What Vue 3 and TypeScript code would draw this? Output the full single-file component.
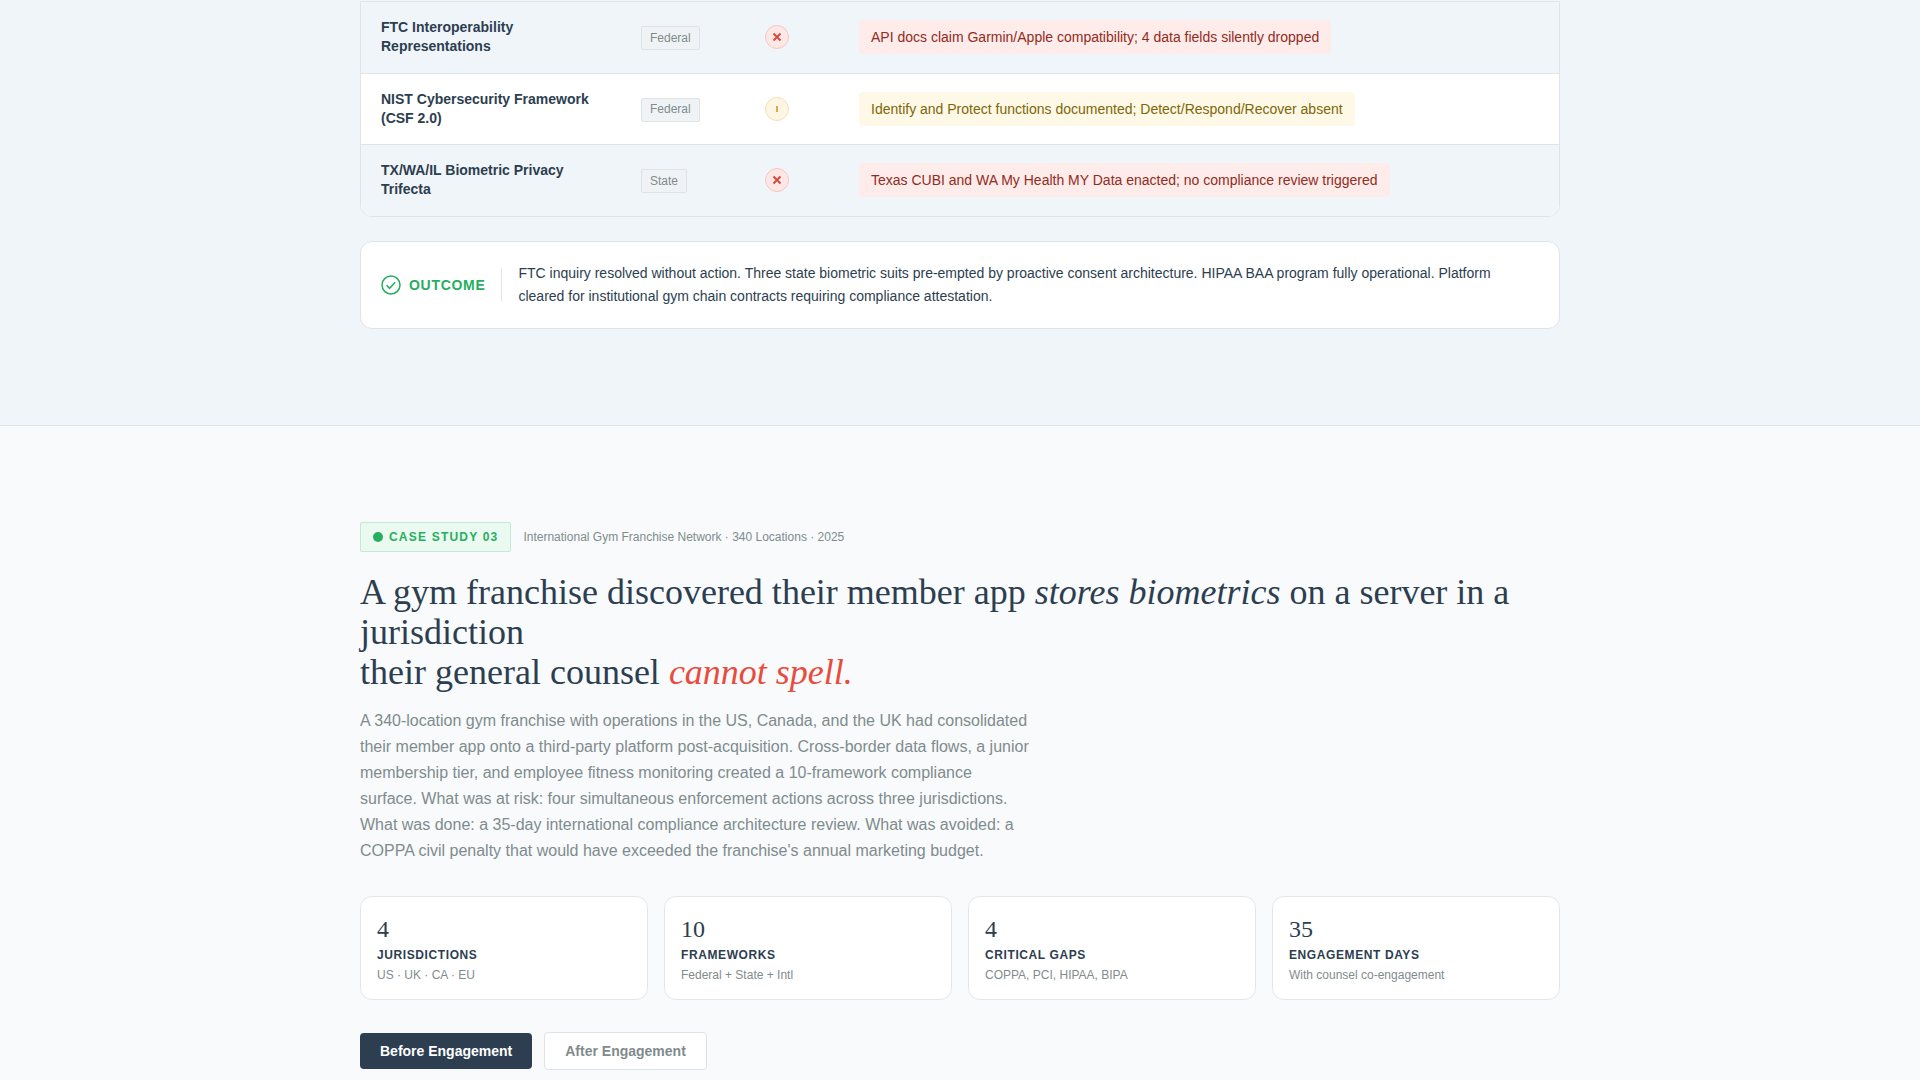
<script setup lang="ts">
import { ref } from "vue";

interface Row {
  name: string;
  scope: string;
  level: "fail" | "warn";
  note: string;
}

const rows: Row[] = [
  {
    name: "FTC Interoperability Representations",
    scope: "Federal",
    level: "fail",
    note: "API docs claim Garmin/Apple compatibility; 4 data fields silently dropped",
  },
  {
    name: "NIST Cybersecurity Framework (CSF 2.0)",
    scope: "Federal",
    level: "warn",
    note: "Identify and Protect functions documented; Detect/Respond/Recover absent",
  },
  {
    name: "TX/WA/IL Biometric Privacy Trifecta",
    scope: "State",
    level: "fail",
    note: "Texas CUBI and WA My Health MY Data enacted; no compliance review triggered",
  },
];

const stats = [
  { value: "4", label: "Jurisdictions", sub: "US · UK · CA · EU" },
  { value: "10", label: "Frameworks", sub: "Federal + State + Intl" },
  { value: "4", label: "Critical Gaps", sub: "COPPA, PCI, HIPAA, BIPA" },
  { value: "35", label: "Engagement Days", sub: "With counsel co-engagement" },
];

const tab = ref<"before" | "after">("before");
</script>

<template>
  <div class="page">
    <section class="prev-case">
      <div class="wrap">
        <div class="table">
          <div v-for="row in rows" :key="row.name" class="row">
            <div class="name">{{ row.name }}</div>
            <div><span class="scope">{{ row.scope }}</span></div>
            <div>
              <span class="status" :class="row.level">
                <svg v-if="row.level === 'fail'" width="10" height="10" viewBox="0 0 10 10">
                  <path d="M1.5 1.5l7 7M8.5 1.5l-7 7" fill="none" stroke="currentColor" stroke-width="2" />
                </svg>
                <svg v-else width="10" height="10" viewBox="0 0 10 10">
                  <path d="M5 2v6" fill="none" stroke="currentColor" stroke-width="1.6" />
                </svg>
              </span>
            </div>
            <div><span class="note" :class="row.level">{{ row.note }}</span></div>
          </div>
        </div>

        <div class="outcome">
          <div class="outcome-label">
            <svg width="20" height="20" viewBox="0 0 20 20" fill="none" stroke="currentColor">
              <circle cx="10" cy="10" r="9" stroke-width="1.5" />
              <path d="M5.6 10.3l3 3 5.6-6" stroke-width="1.5" />
            </svg>
            OUTCOME
          </div>
          <p>
            FTC inquiry resolved without action. Three state biometric suits pre-empted by proactive
            consent architecture. HIPAA BAA program fully operational. Platform cleared for
            institutional gym chain contracts requiring compliance attestation.
          </p>
        </div>
      </div>
    </section>

    <section class="case">
      <div class="wrap">
        <div class="case-head">
          <span class="case-badge"><i></i>CASE STUDY 03</span>
          <span class="case-meta">International Gym Franchise Network · 340 Locations · 2025</span>
        </div>

        <h1>
          A gym franchise discovered their member app <em>stores biometrics</em> on a server in a
          jurisdiction<br />
          their general counsel <em class="red">cannot spell.</em>
        </h1>

        <p class="lead">
          A 340-location gym franchise with operations in the US, Canada, and the UK had consolidated
          their member app onto a third-party platform post-acquisition. Cross-border data flows, a
          junior membership tier, and employee fitness monitoring created a 10-framework compliance
          surface. What was at risk: four simultaneous enforcement actions across three
          jurisdictions. What was done: a 35-day international compliance architecture review. What
          was avoided: a COPPA civil penalty that would have exceeded the franchise's annual
          marketing budget.
        </p>

        <div class="stats">
          <div v-for="s in stats" :key="s.label" class="stat">
            <div class="stat-value">{{ s.value }}</div>
            <div class="stat-label">{{ s.label }}</div>
            <div class="stat-sub">{{ s.sub }}</div>
          </div>
        </div>

        <div class="tabs">
          <button type="button" class="tab" :class="{ active: tab === 'before' }" @click="tab = 'before'">
            Before Engagement
          </button>
          <button type="button" class="tab" :class="{ active: tab === 'after' }" @click="tab = 'after'">
            After Engagement
          </button>
        </div>
      </div>
    </section>
  </div>
</template>

<style scoped>
.page {
  font-family: "Liberation Sans", Arial, sans-serif;
  color: #2c3e50;
}

.wrap {
  width: 1200px;
  margin: 0 auto;
}

.prev-case {
  background: #f0f5f9;
  padding: 1px 0 96px;
  border-bottom: 1px solid #dde3e9;
}

.case {
  background: #f8fafc;
  padding: 96px 0 40px;
}

.table {
  background: #fff;
  border: 1px solid #dde4ec;
  border-radius: 0 0 12px 12px;
  overflow: hidden;
}

.row {
  display: grid;
  grid-template-columns: 260px 124px 94px 1fr;
  align-items: center;
  padding: 16.25px 20px;
  border-bottom: 1px solid #dde4ec;
}

.row:last-child {
  border-bottom: none;
}

.row:nth-child(odd) {
  background: #f0f5f9;
}

.name {
  padding-right: 30px;
  font-size: 14px;
  font-weight: 700;
  line-height: 19px;
}

.scope {
  display: inline-block;
  margin-top: 2px;
  font-size: 12px;
  line-height: 15px;
  padding: 3.5px 8px;
  color: #7f8c8d;
  background: #f0f3f5;
  border: 1px solid #dde3e9;
  border-radius: 2px;
}

.status {
  display: flex;
  align-items: center;
  justify-content: center;
  box-sizing: border-box;
  width: 24px;
  height: 24px;
  border-radius: 50%;
  border: 1px solid;
}

.status.fail {
  color: #d94a3d;
  background: #fde8e6;
  border-color: #f5c6c2;
}

.status.warn {
  color: #d9962a;
  background: #fef6e4;
  border-color: #f6e0b5;
}

.note {
  display: inline-block;
  font-size: 14px;
  line-height: 18px;
  padding: 8px 12px;
  border-radius: 4px;
}

.note.fail {
  color: #922b21;
  background: #fdecea;
}

.note.warn {
  color: #7d6608;
  background: #fef9e7;
}

.outcome {
  display: flex;
  align-items: center;
  margin-top: 24px;
  padding: 20px;
  background: #fff;
  border: 1px solid #dde4ec;
  border-radius: 12px;
}

.outcome-label {
  display: flex;
  align-items: center;
  gap: 8px;
  flex-shrink: 0;
  height: 34px;
  padding-right: 16px;
  margin-right: 16px;
  border-right: 1px solid #e4e8ec;
  color: #27ae60;
  font-size: 14px;
  font-weight: 700;
  letter-spacing: 0.7px;
}

.outcome p {
  margin: 0;
  font-size: 14px;
  line-height: 23px;
}

.case-head {
  display: flex;
  align-items: center;
  gap: 12px;
}

.case-badge {
  display: flex;
  align-items: center;
  gap: 6px;
  height: 30px;
  box-sizing: border-box;
  padding: 0 12px;
  background: #eafaf1;
  border: 1px solid #c5e8d4;
  border-radius: 2px;
  color: #27ae60;
  font-size: 12px;
  font-weight: 700;
  letter-spacing: 1.2px;
}

.case-badge i {
  width: 10px;
  height: 10px;
  border-radius: 50%;
  background: #27ae60;
}

.case-meta {
  font-size: 12px;
  color: #7f8c8d;
}

h1 {
  margin: 20px 0 16px;
  font-family: "Liberation Serif", "Times New Roman", serif;
  font-size: 36px;
  font-weight: 400;
  line-height: 40px;
}

h1 em.red {
  color: #e74c3c;
}

.lead {
  margin: 0 0 32px;
  width: 670px;
  font-size: 16px;
  line-height: 26px;
  color: #7f8c8d;
}

.stats {
  display: grid;
  grid-template-columns: repeat(4, 1fr);
  gap: 16px;
}

.stat {
  padding: 16px;
  background: #fff;
  border: 1px solid #e2e7ec;
  border-radius: 12px;
}

.stat-value {
  font-family: "Liberation Serif", "Times New Roman", serif;
  font-size: 24px;
  line-height: 32px;
}

.stat-label {
  margin-top: 2px;
  font-size: 12px;
  font-weight: 700;
  letter-spacing: 0.6px;
  line-height: 16px;
  text-transform: uppercase;
}

.stat-sub {
  margin-top: 4px;
  font-size: 12px;
  line-height: 16px;
  color: #7f8c8d;
}

.tabs {
  display: flex;
  align-items: center;
  gap: 12px;
  margin-top: 32px;
}

.tab {
  height: 38px;
  padding: 0 20px;
  font-family: inherit;
  font-size: 14px;
  font-weight: 700;
  color: #7f8c8d;
  background: #fff;
  border: 1px solid #dde3e9;
  border-radius: 4px;
  cursor: pointer;
}

.tab.active {
  height: 36px;
  color: #fff;
  background: #2c3e50;
  border: none;
}
</style>

<style>
html,
body {
  background: #f8fafc;
}
</style>
